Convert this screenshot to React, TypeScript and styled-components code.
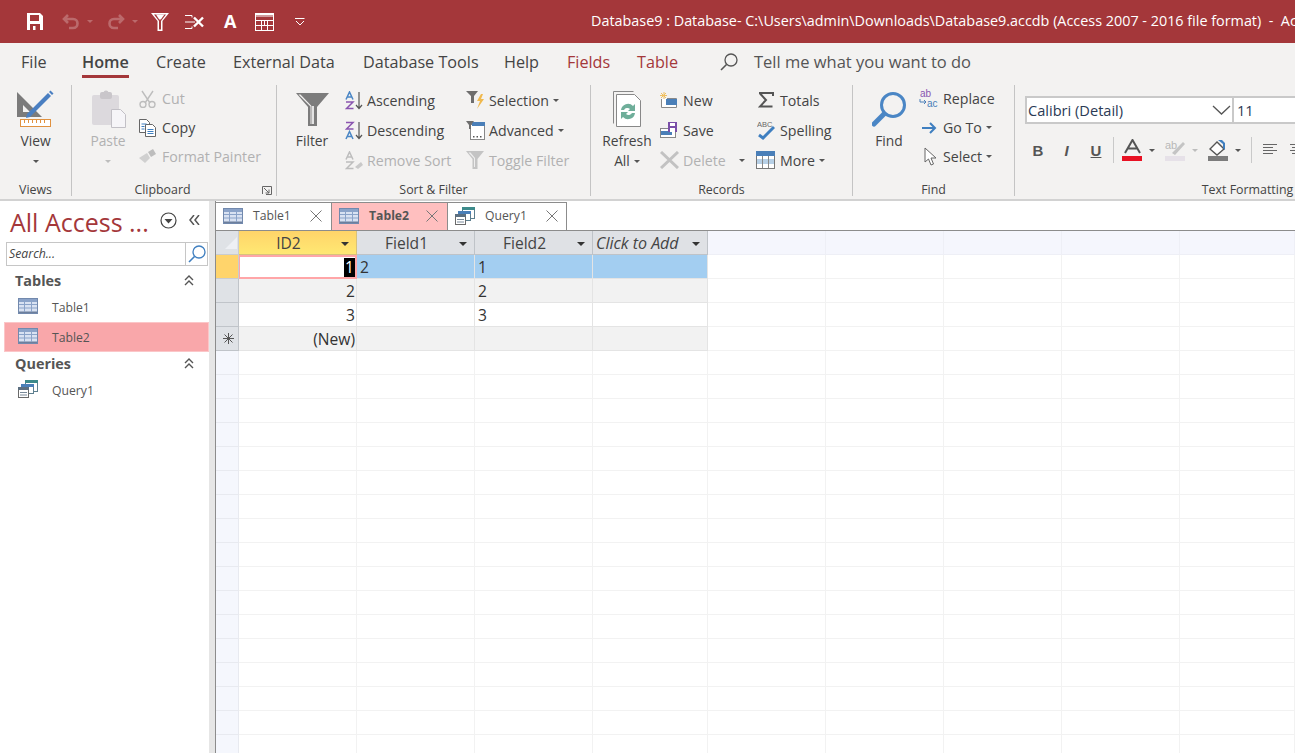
import React from 'react';
import styled, { createGlobalStyle } from 'styled-components';

const Global = createGlobalStyle`
  html, body { margin: 0; padding: 0; background: #fff; overflow: hidden; }
  * { box-sizing: border-box; }
`;
const FONT = `"Open Sans", "Noto Sans", "Liberation Sans", sans-serif`;
const RED = '#a4373a';

const Page = styled.div`
  width: 1295px; height: 753px; overflow: hidden; display: flex; flex-direction: column;
  font-family: ${FONT}; color: #444;
`;
const TitleBar = styled.header`
  height: 43px; background: ${RED}; display: flex; align-items: center; flex-shrink: 0;
`;
const Qat = styled.div`
  width: 591px; flex-shrink: 0; height: 100%; display: flex; align-items: center; padding-left: 27px;
`;
const QatSlot = styled.span<{ $w: number }>`
  width: ${p => p.$w}px; flex-shrink: 0; display: flex; align-items: center; height: 100%;
`;
const QatLetter = styled.span`
  color: #fff; font-size: 18px; font-weight: 700; line-height: 18px; margin-top: -2px;
`;
const Title = styled.div`
  color: #fff; font-size: 14.38px; white-space: pre; margin-top: -3px;
`;
const Tabs = styled.nav`
  height: 37px; background: #f3f2f1; display: flex; padding-left: 21px; flex-shrink: 0;
`;
const Tab = styled.div<{ $w: number }>`
  width: ${p => p.$w}px; flex-shrink: 0;
`;
const TabLabel = styled.span<{ $active?: boolean; $ctx?: boolean }>`
  display: inline-block; padding-top: 8px; height: 35px; line-height: 22px; font-size: 16.2px;
  white-space: nowrap; color: ${p => (p.$ctx ? RED : '#444')};
  font-weight: ${p => (p.$active ? 600 : 400)};
  border-bottom: 3px solid ${p => (p.$active ? RED : 'transparent')};
`;
const TellMe = styled.div`
  display: flex; align-items: center; gap: 16px; height: 37px; font-size: 16.5px; color: #555; white-space: nowrap;
`;
const Ribbon = styled.section`
  height: 121px; background: #f3f2f1; display: flex; padding-top: 5px; flex-shrink: 0;
  border-bottom: 2px solid #d2d2d2; overflow: hidden;
`;
const Group = styled.div<{ $w: number; $last?: boolean }>`
  width: ${p => p.$w}px; flex-shrink: 0; height: 111px; display: flex; flex-direction: column;
  border-right: ${p => (p.$last ? 'none' : '1px solid #c4c4c4')};
`;
const GroupBody = styled.div<{ $pl?: number }>`
  height: 97px; display: flex; padding-left: ${p => p.$pl ?? 0}px; flex-shrink: 0;
`;
const GroupFoot = styled.div`
  height: 14px; display: flex; align-items: flex-start;
`;
const GroupLabel = styled.div`
  flex: 1; text-align: center; font-size: 12.4px; line-height: 16px; margin-top: 0; color: #444; white-space: nowrap;
`;
const Launcher = styled.span`
  width: 10px; height: 9px; margin: 4px 4px 0 9px; display: flex;
`;
const Large = styled.div<{ $w: number; $off?: boolean }>`
  width: ${p => p.$w}px; flex-shrink: 0; padding-top: 4px; display: flex; flex-direction: column; align-items: center;
  font-size: 13.8px; line-height: 20px; color: ${p => (p.$off ? '#b1b1b1' : '#444')};
`;
const LargeIcon = styled.div`
  height: 40px; margin-bottom: 2px; display: flex; align-items: center; justify-content: center;
`;
const LargeLine = styled.div`
  height: 20px; display: flex; align-items: center; gap: 3px; white-space: nowrap;
`;
const Col = styled.div<{ $w: number; $ml?: number; $rh?: number; $mt?: number }>`
  width: ${p => p.$w}px; flex-shrink: 0; margin-left: ${p => p.$ml ?? 0}px; margin-top: ${p => p.$mt ?? 0}px;
  display: grid; grid-auto-rows: ${p => p.$rh ?? 30}px; align-content: start;
`;
const Row = styled.div<{ $off?: boolean }>`
  display: flex; align-items: center; font-size: 14.2px; white-space: nowrap;
  color: ${p => (p.$off ? '#b1b1b1' : '#444')};
`;
const RowIcon = styled.span<{ $w: number; $pl?: number }>`
  width: ${p => p.$w}px; flex-shrink: 0; display: flex; align-items: center; padding-left: ${p => p.$pl ?? 0}px;
`;
const Caret = styled.span<{ $off?: boolean; $ml?: number }>`
  display: inline-block; width: 0; height: 0; margin-left: ${p => p.$ml ?? 4}px;
  border-left: 3px solid transparent; border-right: 3px solid transparent;
  border-top: 3px solid ${p => (p.$off ? '#bdbdbd' : '#555')};
`;
const FormatBody = styled.div`
  padding: 11px 0 0 10px; height: 97px; display: flex; flex-direction: column;
`;
const FontRow = styled.div`
  display: flex; height: 28px;
`;
const FontBox = styled.div`
  width: 208px; height: 28px; background: #fff; border: 2px solid #c9c9c9; border-right-width: 1px;
  display: flex; align-items: center; justify-content: space-between; padding: 0 1px 0 1px;
  font-size: 14.6px; color: #2b3a55;
`;
const SizeBox = styled.div`
  width: 100px; height: 28px; background: #fff; border: 2px solid #c9c9c9; border-left-width: 1px;
  display: flex; align-items: center; padding-left: 3px; font-size: 14.6px; color: #2b3a55;
`;
const FormatTools = styled.div`
  display: flex; align-items: center; margin-top: 12px; height: 28px;
`;
const FormatBtn = styled.span<{ $w: number; $i?: boolean; $u?: boolean }>`
  width: ${p => p.$w}px; flex-shrink: 0; text-align: center; font-size: 15px; font-weight: 700; color: #555;
  font-style: ${p => (p.$i ? 'italic' : 'normal')}; text-decoration: ${p => (p.$u ? 'underline' : 'none')};
  font-family: "Liberation Sans", sans-serif;
`;
const ToolSep = styled.span<{ $ml: number; $mr: number }>`
  width: 1px; height: 26px; background: #c9c9c9; margin: 0 ${p => p.$mr}px 0 ${p => p.$ml}px; flex-shrink: 0;
`;
const Tool = styled.span<{ $w: number }>`
  width: ${p => p.$w}px; flex-shrink: 0; display: flex; align-items: center;
`;

const Workspace = styled.main`
  flex: 1; display: flex; min-height: 0; background: #fff;
`;
const Nav = styled.aside`
  width: 209px; flex-shrink: 0; background: #fff; display: flex; flex-direction: column;
`;
const NavHead = styled.div`
  height: 41px; display: flex; align-items: center; padding-left: 10px; flex-shrink: 0;
`;
const NavTitle = styled.div`
  color: ${RED}; font-size: 25px; width: 150px; white-space: nowrap; margin-top: 1px;
`;
const NavIconBtn = styled.span<{ $w: number }>`
  width: ${p => p.$w}px; flex-shrink: 0; display: flex; align-items: center; margin-top: -3px;
`;
const SearchBox = styled.div`
  margin-left: 6px; width: 202px; height: 24px; border: 1px solid #c6c6c6; display: flex; flex-shrink: 0;
`;
const SearchInput = styled.div`
  flex: 1; font-style: italic; font-size: 12.3px; line-height: 22px; padding-left: 2px; color: #444; border-right: 1px solid #c6c6c6;
`;
const SearchBtn = styled.span`
  width: 21px; display: flex; align-items: center; justify-content: center;
`;
const NavSection = styled.div<{ $h: number; $pt: number }>`
  height: ${p => p.$h}px; padding: ${p => p.$pt}px 15px 0 15px; display: flex; align-items: center; justify-content: space-between;
  font-size: 14.4px; font-weight: 700; color: #555;
`;
const NavItem = styled.div<{ $sel?: boolean }>`
  margin-left: 4px; height: 30px; display: flex; align-items: center; padding-left: ${p => (p.$sel ? 13 : 14)}px; gap: 14px;
  font-size: 12.2px; color: #555; background: ${p => (p.$sel ? '#f9a7aa' : 'transparent')};
  border: ${p => (p.$sel ? '1px solid #fbc6c8' : '0 solid transparent')};
`;
const NavIcon = styled.span`
  width: 20px; display: flex; align-items: center; margin-top: -2px;
`;
const Splitter = styled.div`
  width: 6px; flex-shrink: 0; background: #e6e6e6;
`;
const Main = styled.div`
  flex: 1; min-width: 0; display: flex; flex-direction: column; border-left: 1px solid #8c8c8c; overflow: hidden;
`;
const DocTabs = styled.div`
  height: 30px; display: flex; flex-shrink: 0; padding-top: 1px; border-bottom: 1px solid #8c8c8c; background: #fff;
`;
const DocTab = styled.div<{ $w: number; $on?: boolean }>`
  width: ${p => p.$w}px; flex-shrink: 0; display: flex; align-items: center; padding-left: 7px; padding-bottom: 2px;
  border-top: 1px solid #8c8c8c; border-right: 1px solid #8c8c8c; background: ${p => (p.$on ? '#ffbfbf' : '#fff')};
  font-size: 12.2px; font-weight: ${p => (p.$on ? 700 : 400)}; color: #555;
`;
const DocLabel = styled.span<{ $w: number }>`
  width: ${p => p.$w}px; margin-left: 10px; white-space: nowrap;
`;
const Sheet = styled.div`
  display: grid; grid-template-columns: 23px 118px 118px 118px 115px 118px 118px 118px 118px 115px; grid-auto-rows: 24px;
  font-size: 15.6px;
`;
type CellKind = 'plain' | 'alt' | 'sel' | 'empty' | 'corner' | 'head' | 'active' | 'sideOn' | 'side' | 'sideEmpty' | 'ghost' | 'edit';
const bg: Record<CellKind, string> = {
  plain: '#fff', alt: '#f2f2f2', sel: '#a3cef1', empty: '#fff', corner: '#dfe2e6', head: '#dfe1e5',
  active: 'linear-gradient(#ffd469, #ffe873)', sideOn: '#ffd46b', side: '#dfe2e6', sideEmpty: '#f5f7fd', ghost: '#f5f6fd', edit: '#fff',
};
const line: Record<CellKind, string> = {
  plain: '#e4e4e4', alt: '#e4e4e4', sel: '#e4e4e4', empty: '#f2f2f2', corner: '#c9ccd0', head: '#bfc3c8',
  active: '#d8c27c', sideOn: '#c9ccd0', side: '#c0c4c9', sideEmpty: '#e8eaf0', ghost: '#eeeff6', edit: '#ffa6a8',
};
const Cell = styled.div<{ $k: CellKind; $right?: boolean; $italic?: boolean }>`
  background: ${p => bg[p.$k]};
  border-right: 1px solid ${p => line[p.$k]};
  border-bottom: 1px solid ${p => line[p.$k]};
  ${p => (p.$k === 'edit' ? 'border: 2px solid #ffa6a8; border-left-width: 1px;' : '')}
  display: flex; align-items: center; white-space: nowrap; padding: 0 ${p => (p.$k === 'edit' ? 0 : 1)}px 0 3px;
  justify-content: ${p => (p.$right ? 'flex-end' : 'flex-start')};
  font-style: ${p => (p.$italic ? 'italic' : 'normal')};
  color: #333;
`;
const HeadCell = styled(Cell)`
  padding: 0 7px 0 0; color: #444; justify-content: center;
`;
const HeadText = styled.span<{ $left?: boolean }>`
  flex: 1; text-align: ${p => (p.$left ? 'left' : 'center')}; margin-left: ${p => (p.$left ? 3 : -3)}px;
  font-size: ${p => (p.$left ? 16 : 15.6)}px;
`;
const DropArrow = styled.span`
  width: 0; height: 0; border-left: 4px solid transparent; border-right: 4px solid transparent; border-top: 4px solid #333; margin-top: 2px; flex-shrink: 0;
`;
const SelText = styled.span`
  background: #000; color: #fff; padding: 0 1px; line-height: 19px;
`;
const SideStar = styled.span`
  width: 100%; display: flex; justify-content: center;
`;

/* ---------- drawings ---------- */
const SaveIcon = () => (
  <svg width="16" height="17" viewBox="0 0 16 17"><path fill="#fff" d="M0 0h13l3 3v14H0z" /><rect x="3" y="2" width="9" height="6" fill={RED} /><rect x="3" y="11" width="10" height="6" fill={RED} /><rect x="6" y="13" width="2.5" height="4" fill="#fff" /></svg>
);
const Undo = ({ flip }: { flip?: boolean }) => (
  <svg width="18" height="16" viewBox="0 0 18 16" style={flip ? { transform: 'scaleX(-1)' } : undefined}><path d="M6 1 2 5l4 4M2 5h9c6 0 6 9 0 9H7" fill="none" stroke="#bb6a6c" strokeWidth="2.6" /></svg>
);
const MiniCaret = () => <svg width="6" height="3" viewBox="0 0 6 3"><path d="M0 0h6L3 3z" fill="#bb6a6c" /></svg>;
const QatFilter = () => (
  <svg width="18" height="18" viewBox="0 0 18 18"><path d="M0 0h18l-6.500 8v10h-5V8z" fill="#fff" /><path d="M3 1.500h12L10 8v8.500H8V8z" fill={RED} /><path d="M5 1.500h8.500L9.800 6.500H8.200z" fill="#fff" /></svg>
);
const QatField = () => (
  <svg width="20" height="16" viewBox="0 0 20 16" fill="none" stroke="#fff"><path d="M0 1.500h7v2M0 8h10M0 14.500h7v-2" /><path d="M9 3.500l9 9M18 3.500l-9 9" strokeWidth="2.400" /></svg>
);
const QatTable = () => (
  <svg width="19" height="18" viewBox="0 0 19 18" fill="none" stroke="#fff"><rect x=".5" y=".5" width="18" height="17" /><path d="M.5 1.500h18M.5 3h18" /><path d="M.5 7.500h18M.5 12.500h18M6.500 7.500v10M12.500 7.500v10M9.500 7.500v5" /></svg>
);
const QatDrop = () => (
  <svg width="10" height="8" viewBox="0 0 10 8" fill="none" stroke="#fff"><path d="M0 .5h9.500M1 3l4 4 4-4" /></svg>
);
const ViewIcon = () => (
  <svg width="37" height="38" viewBox="0 0 37 38"><path d="M0 2 25 27H0z" fill="#7b7b7b" /><path d="M6 15l7 7H6z" fill="#f3f2f1" /><path d="M10 24 31 3l3 3-21 21-4 1z" fill="#4a7fc1" /><path d="M32 2l1.500-1.500 3 3L35 5z" fill="#4a7fc1" /><rect x="3.500" y="29.500" width="30" height="7" fill="#fff" stroke="#e0913f" /><path d="M7.500 30v3M11.500 30v3M15.500 30v3M19.500 30v3M23.500 30v3M27.500 30v3" stroke="#e0913f" /></svg>
);
const PasteIcon = () => (
  <svg width="35" height="38" viewBox="0 0 35 38"><rect x="1" y="5" width="27" height="30" rx="2" fill="#dcd9dd" /><rect x="9" y="2" width="12" height="7" rx="2" fill="#c9c6ca" /><circle cx="15" cy="3" r="2.500" fill="#c9c6ca" /><path d="M20.500 19.500h9l5 5v13h-14z" fill="#f6f5f8" stroke="#c2c0c6" /></svg>
);
const CutIcon = () => (
  <svg width="17" height="18" viewBox="0 0 17 18" fill="none" stroke="#bdbdbd" strokeWidth="1.400"><path d="M3 1l8 12M14 1 6 13" /><circle cx="4" cy="14.500" r="3" /><circle cx="13" cy="14.500" r="3" /></svg>
);
const CopyIcon = () => (
  <svg width="17" height="18" viewBox="0 0 17 18" fill="#fff"><path d="M.5.500h7l3 3v10H.5z" stroke="#666" /><path d="M6.500 5.500h7l3 3v9h-10z" stroke="#666" /><path d="M2.500 5h5M2.500 7.500h3M2.500 10h3M8.500 10.500h6M8.500 12.500h6M8.500 14.500h6" stroke="#3f7fc0" /></svg>
);
const PainterIcon = () => (
  <svg width="18" height="15" viewBox="0 0 18 15"><path d="M0 9l8-5 3 5-5 5z" fill="#d0d0d0" /><path d="M9 3l5-3 3 5-5 3z" fill="#bdbdbd" /></svg>
);
const FilterBig = () => (
  <svg width="33" height="33" viewBox="0 0 33 33"><path d="M0 0h33L21 14v19h-9V14z" fill="#7c7c7c" /><path d="M2.500 1.500h2L15.500 13v18h-1V13.500z" fill="#f3f2f1" /><rect x="16" y="13" width="2" height="18" fill="#e3e3e3" /></svg>
);
const SortIcon = ({ kind }: { kind: 'a' | 'd' | 'r' }) => {
  const first = kind === 'd' ? '#8a55b0' : kind === 'r' ? '#bdbdbd' : '#4a86c5';
  const second = kind === 'd' ? '#4a86c5' : kind === 'r' ? '#bdbdbd' : '#8a55b0';
  const d1 = kind === 'd' ? 'M1 1.500h7L1.500 8h7' : 'M1 8.500 4.500 1 8 8.500M2 6h5';
  const d2 = kind === 'd' ? 'M1 18 4.500 10.500 8 18M2 15.500h5' : 'M1 11h7L1.500 17.500h7';
  return (
    <svg width="18" height="19" viewBox="0 0 18 19" fill="none">
      <path d={d1} stroke={first} strokeWidth="1.500" />
      <path d={d2} stroke={second} strokeWidth="1.500" />
      {kind === 'r'
        ? <path d="M10 16l6-5 2 3-5 4z" fill="#c9c9c9" />
        : <path d="M14 1v16M11 14l3 3.500 3-3.500" stroke="#555" strokeWidth="1.200" />}
    </svg>
  );
};
const SelectionIcon = () => (
  <svg width="19" height="19" viewBox="0 0 19 19"><path d="M0 0h12L8 5v7H5V5z" fill="#6e6e6e" /><path d="M15 3l-4 7h3l-3 8 7-10h-3l2-5z" fill="#f0b94e" /></svg>
);
const AdvancedIcon = () => (
  <svg width="19" height="19" viewBox="0 0 19 19"><rect x="4.500" y="3.500" width="14" height="15" fill="#fff" stroke="#888" /><rect x="6" y="1" width="13" height="4" fill="#4a7fb8" /><path d="M0 0h8L5 4v4H3V4z" fill="#6e6e6e" /><path d="M7 15h1.500v1.500H7zM10.500 15H12v1.500h-1.500zM14 15h1.500v1.500H14z" fill="#555" /></svg>
);
const ToggleIcon = () => (
  <svg width="18" height="18" viewBox="0 0 18 18"><path d="M0 0h18l-6.500 8v10h-5V8z" fill="#c4c4c4" /><path d="M2.500 1.500h2l4.500 5.500v9H8V7.500z" fill="#eee" /></svg>
);
const RefreshIcon = () => (
  <svg width="29" height="37" viewBox="0 0 29 37" fill="none"><path d="M.5 32.500V.5h20" stroke="#888" /><path d="M3.500 35.500v-32h18l6 6v26z" fill="#fff" stroke="#888" /><path d="M8 19a7 7 0 0 1 12-4l2-2v7h-7l2-2a4 4 0 0 0-6 1z" fill="#6fae9a" /><path d="M22 22a7 7 0 0 1-12 4l-2 2v-7h7l-2 2a4 4 0 0 0 6-1z" fill="#6fae9a" /></svg>
);
const NewIcon = () => (
  <svg width="18" height="16" viewBox="0 0 18 16"><path d="M1.500 7v8.500h15V6.500H7" fill="#fff" stroke="#888" /><rect x="6" y="7" width="11" height="6" fill="#4a7fb8" /><path d="M4 0v7M0 3.500h7M1 1l5 5M6 1 1 6" stroke="#f0c060" /></svg>
);
const SaveSmall = () => (
  <svg width="17" height="16" viewBox="0 0 17 16"><rect x=".5" y="6.500" width="15" height="9" fill="#fff" stroke="#888" /><rect x="1" y="9" width="11" height="4" fill="#4a7fb8" /><rect x="8" y="0" width="9" height="10" fill="#7a4fa8" /><rect x="10" y="1" width="5" height="3" fill="#fff" /><rect x="10" y="6" width="5" height="4" fill="#fff" /></svg>
);
const DeleteIcon = () => (
  <svg width="19" height="18" viewBox="0 0 19 18"><path d="M1 1l17 16M18 1 1 17" stroke="#c2c2c2" strokeWidth="3" /></svg>
);
const SigmaIcon = () => (
  <svg width="16" height="16" viewBox="0 0 16 16"><path d="M1 1h14v3M14.500 14.500H2L8 8 2 1.500" fill="none" stroke="#555" strokeWidth="2" /></svg>
);
const SpellIcon = () => (
  <svg width="18" height="20" viewBox="0 0 18 20"><path d="M2 17l4 3L17 9" fill="none" stroke="#3f7fc0" strokeWidth="3" transform="translate(0 -2)" /><text x="0" y="7" fontSize="7.500" fontFamily="Liberation Sans" fill="#666">ABC</text></svg>
);
const MoreIcon = () => (
  <svg width="19" height="18" viewBox="0 0 19 18"><rect x=".5" y=".5" width="18" height="17" fill="#fff" stroke="#777" /><rect x="1" y="8" width="17" height="5" fill="#b7d0e6" /><rect x="0" y="0" width="19" height="5" fill="#4a7fb8" /><path d="M6.500 5v12M12.500 5v12" stroke="#888" /></svg>
);
const FindIcon = () => (
  <svg width="35" height="36" viewBox="0 0 35 36" fill="none"><circle cx="21" cy="14" r="11.500" stroke="#4a86c5" strokeWidth="3" /><path d="M12 23 2 33" stroke="#4a86c5" strokeWidth="5" strokeLinecap="round" /></svg>
);
const ReplaceIcon = () => (
  <svg width="20" height="19" viewBox="0 0 20 19"><text x="1" y="8" fontSize="10" fontFamily="Liberation Sans" fill="#8a55b0">ab</text><text x="8" y="18" fontSize="10" fontFamily="Liberation Sans" fill="#4a7fb8">ac</text><path d="M1 10v3h6M5 11l2 2-2 2" fill="none" stroke="#4a7fb8" /></svg>
);
const ArrowIcon = () => (
  <svg width="15" height="12" viewBox="0 0 15 12" fill="none" stroke="#3f7fc0" strokeWidth="2"><path d="M0 6h13M8 1l5 5-5 5" /></svg>
);
const CursorIcon = () => (
  <svg width="13" height="19" viewBox="0 0 13 19"><path d="M1 1v14l3.500-3 2.500 6 2.500-1-2.500-6h5z" fill="#fff" stroke="#666" /></svg>
);
const Launch = () => (
  <svg width="10" height="9" viewBox="0 0 10 9" fill="none" stroke="#666"><path d="M.5 8V.5H9.500V8.500H4" /><path d="M2 2l5 5M7 3.500V7H3.500" /></svg>
);
const SearchGlass = ({ size = 18, color = '#555' }: { size?: number; color?: string }) => (
  <svg width={size} height={size} viewBox="0 0 18 18" fill="none" stroke={color}><circle cx="11" cy="7" r="6" strokeWidth="1.300" /><path d="M6.500 11.500 1 17" strokeWidth="1.600" /></svg>
);
const Chevron = () => (
  <svg width="19" height="10" viewBox="0 0 19 10" fill="none" stroke="#555" strokeWidth="1.300"><path d="M1 1l8.500 8L18 1" /></svg>
);
const FontColor = () => (
  <svg width="21" height="23" viewBox="0 0 21 23"><path d="M3 14 10.500 1 18 14M6 9.500h9" fill="none" stroke="#555" strokeWidth="2" /><rect x="0" y="17" width="20" height="5" fill="#e81123" /></svg>
);
const Highlight = () => (
  <svg width="21" height="22" viewBox="0 0 21 22"><text x="0" y="10" fontSize="11" fontFamily="Liberation Sans" fill="#b8b8b8">ab</text><path d="M7 14 18 3l2 2L10 16z" fill="#c4c4c4" /><rect x="0" y="17" width="20" height="5" fill="#e6e1e8" /></svg>
);
const Bucket = () => (
  <svg width="21" height="23" viewBox="0 0 21 23"><path d="M2 10l7-7 7 7-7 6z" fill="#fff" stroke="#555" strokeWidth="1.400" /><path d="M10 1h4l3 3v7l-2-2V5z" fill="#3f7fc0" /><rect x="0" y="17" width="20" height="5" fill="#7c7c7c" /></svg>
);
const AlignLeft = () => (
  <svg width="15" height="12" viewBox="0 0 15 12" stroke="#666"><path d="M0 .5h14M0 3.500h10M0 6.500h14M0 9.500h10" /></svg>
);
const AlignCenter = () => (
  <svg width="15" height="12" viewBox="0 0 15 12" stroke="#666"><path d="M0 .5h14M2 3.500h10M0 6.500h14M2 9.500h10" /></svg>
);
const CircleDown = () => (
  <svg width="17" height="17" viewBox="0 0 17 17" fill="none"><circle cx="8.500" cy="8.500" r="7.500" stroke="#444" strokeWidth="1.200" /><path d="M4.500 7h8l-4 4.500z" fill="#444" /></svg>
);
const DoubleLeft = () => (
  <svg width="11" height="10" viewBox="0 0 11 10" fill="none" stroke="#555" strokeWidth="1.500"><path d="M5 0 1 5l4 5M10 0 6 5l4 5" /></svg>
);
const DoubleUp = () => (
  <svg width="10" height="11" viewBox="0 0 10 11" fill="none" stroke="#555" strokeWidth="1.400"><path d="M1 5l4-4 4 4M1 10l4-4 4 4" /></svg>
);
const TableIcon = () => (
  <svg width="20" height="16" viewBox="0 0 20 16">
    <rect width="20" height="16" fill="#d9e2f2" />
    <rect width="20" height="4" fill="#8ba3c9" />
    <rect y="13.500" width="20" height="2.500" fill="#6d7f9c" />
    <path d="M6.500 0v14M13.500 0v14M0 6.500h20M0 10h20" stroke="#8ba3c9" />
    <rect x=".5" y=".5" width="19" height="15" fill="none" stroke="#7289ad" />
  </svg>
);
const QueryIcon = () => (
  <svg width="20" height="18" viewBox="0 0 20 18">
    <rect x="7.500" y=".5" width="12" height="11" fill="#fff" stroke="#5d7f8f" /><rect x="7" width="13" height="3" fill="#3d8a8a" />
    <rect x="3.500" y="4.500" width="12" height="9" fill="#fff" stroke="#5d7f8f" /><rect x="3" y="4" width="13" height="3" fill="#4a7fb8" />
    <rect x=".5" y="7.500" width="10" height="10" fill="#fff" stroke="#6a6a6a" /><rect y="7" width="11" height="3" fill="#5c6f80" />
    <path d="M2 12.500h7M2 15h7" stroke="#7a8a9a" />
  </svg>
);
const CloseX = () => (
  <svg width="12" height="12" viewBox="0 0 12 12" stroke="#777"><path d="M.5.5l11 11M11.500.5l-11 11" /></svg>
);
const Corner = () => (
  <svg width="12" height="12" viewBox="0 0 12 12"><path d="M12 0v12H0z" fill="#eef0f4" /></svg>
);
const Asterisk = () => (
  <svg width="11" height="11" viewBox="0 0 11 11" stroke="#555"><path d="M5.500 0v11M0 5.500h11M1.500 1.500l8 8M9.500 1.500l-8 8" /></svg>
);

/* ---------- data ---------- */
const tabs: [string, number, boolean?, boolean?][] = [
  ['File', 61], ['Home', 74, true], ['Create', 77], ['External Data', 130], ['Database Tools', 141], ['Help', 63],
  ['Fields', 70, false, true], ['Table', 83, false, true],
];
const ghosts = Array.from({ length: 5 });
const blankRows = Array.from({ length: 18 });
const dataRows: { id: string; f1: string; f2: string }[] = [
  { id: '2', f1: '', f2: '2' },
  { id: '3', f1: '', f2: '3' },
  { id: '(New)', f1: '', f2: '' },
];
const Fill = ({ k, n }: { k: CellKind; n: number }) => (
  <>{Array.from({ length: n }).map((_, i) => <Cell key={i} $k={k} />)}</>
);

export default function App() {
  return (
    <Page>
      <Global />
      <TitleBar>
        <Qat>
          <QatSlot $w={35}><SaveIcon /></QatSlot>
          <QatSlot $w={25}><Undo /></QatSlot>
          <QatSlot $w={20}><MiniCaret /></QatSlot>
          <QatSlot $w={25}><Undo flip /></QatSlot>
          <QatSlot $w={19}><MiniCaret /></QatSlot>
          <QatSlot $w={34}><QatFilter /></QatSlot>
          <QatSlot $w={39}><QatField /></QatSlot>
          <QatSlot $w={31}><QatLetter>A</QatLetter></QatSlot>
          <QatSlot $w={40}><QatTable /></QatSlot>
          <QatSlot $w={12}><QatDrop /></QatSlot>
        </Qat>
        <Title>{'Database9 : Database- C:\\Users\\admin\\Downloads\\Database9.accdb (Access 2007 - 2016 file format)  -  Access'}</Title>
      </TitleBar>
      <Tabs>
        {tabs.map(([t, w, a, c]) => (
          <Tab key={t} $w={w}><TabLabel $active={a} $ctx={c}>{t}</TabLabel></Tab>
        ))}
        <TellMe><SearchGlass /><span>Tell me what you want to do</span></TellMe>
      </Tabs>
      <Ribbon>
        <Group $w={72}>
          <GroupBody>
            <Large $w={71}>
              <LargeIcon><ViewIcon /></LargeIcon>
              <LargeLine>View</LargeLine>
              <LargeLine><Caret $ml={0} /></LargeLine>
            </Large>
          </GroupBody>
          <GroupFoot><GroupLabel>Views</GroupLabel></GroupFoot>
        </Group>
        <Group $w={205}>
          <GroupBody $pl={6}>
            <Large $w={60} $off>
              <LargeIcon><PasteIcon /></LargeIcon>
              <LargeLine>Paste</LargeLine>
              <LargeLine><Caret $ml={0} $off /></LargeLine>
            </Large>
            <Col $w={130} $ml={1} $rh={29} $mt={-1}>
              <Row $off><RowIcon $w={23}><CutIcon /></RowIcon>Cut</Row>
              <Row><RowIcon $w={23}><CopyIcon /></RowIcon>Copy</Row>
              <Row $off><RowIcon $w={23}><PainterIcon /></RowIcon>Format Painter</Row>
            </Col>
          </GroupBody>
          <GroupFoot><GroupLabel>Clipboard</GroupLabel><Launcher><Launch /></Launcher></GroupFoot>
        </Group>
        <Group $w={314}>
          <GroupBody $pl={5}>
            <Large $w={60}>
              <LargeIcon><FilterBig /></LargeIcon>
              <LargeLine>Filter</LargeLine>
            </Large>
            <Col $w={121} $ml={3}>
              <Row><RowIcon $w={22}><SortIcon kind="a" /></RowIcon>Ascending</Row>
              <Row><RowIcon $w={22}><SortIcon kind="d" /></RowIcon>Descending</Row>
              <Row $off><RowIcon $w={22}><SortIcon kind="r" /></RowIcon>Remove Sort</Row>
            </Col>
            <Col $w={120}>
              <Row><RowIcon $w={23}><SelectionIcon /></RowIcon>Selection<Caret /></Row>
              <Row><RowIcon $w={23}><AdvancedIcon /></RowIcon>Advanced<Caret /></Row>
              <Row $off><RowIcon $w={23}><ToggleIcon /></RowIcon>Toggle Filter</Row>
            </Col>
          </GroupBody>
          <GroupFoot><GroupLabel>Sort &amp; Filter</GroupLabel></GroupFoot>
        </Group>
        <Group $w={262}>
          <GroupBody $pl={5}>
            <Large $w={62}>
              <LargeIcon><RefreshIcon /></LargeIcon>
              <LargeLine>Refresh</LargeLine>
              <LargeLine>All<Caret $ml={1} /></LargeLine>
            </Large>
            <Col $w={96} $ml={2}>
              <Row><RowIcon $w={23}><NewIcon /></RowIcon>New</Row>
              <Row><RowIcon $w={23}><SaveSmall /></RowIcon>Save</Row>
              <Row $off><RowIcon $w={23}><DeleteIcon /></RowIcon>Delete<Caret $ml={13} /></Row>
            </Col>
            <Col $w={90}>
              <Row><RowIcon $w={24} $pl={2}><SigmaIcon /></RowIcon>Totals</Row>
              <Row><RowIcon $w={24} $pl={1}><SpellIcon /></RowIcon>Spelling</Row>
              <Row><RowIcon $w={24}><MoreIcon /></RowIcon>More<Caret /></Row>
            </Col>
          </GroupBody>
          <GroupFoot><GroupLabel>Records</GroupLabel></GroupFoot>
        </Group>
        <Group $w={162}>
          <GroupBody $pl={6}>
            <Large $w={60}>
              <LargeIcon><FindIcon /></LargeIcon>
              <LargeLine>Find</LargeLine>
            </Large>
            <Col $w={90} $rh={29} $mt={-1}>
              <Row><RowIcon $w={24}><ReplaceIcon /></RowIcon>Replace</Row>
              <Row><RowIcon $w={24} $pl={3}><ArrowIcon /></RowIcon>Go To<Caret /></Row>
              <Row><RowIcon $w={24} $pl={5}><CursorIcon /></RowIcon>Select<Caret /></Row>
            </Col>
          </GroupBody>
          <GroupFoot><GroupLabel>Find</GroupLabel></GroupFoot>
        </Group>
        <Group $w={465} $last>
          <FormatBody>
            <FontRow>
              <FontBox>Calibri (Detail)<Chevron /></FontBox>
              <SizeBox>11</SizeBox>
            </FontRow>
            <FormatTools>
              <FormatBtn $w={26}>B</FormatBtn>
              <FormatBtn $w={31} $i>I</FormatBtn>
              <FormatBtn $w={28} $u>U</FormatBtn>
              <ToolSep $ml={3} $mr={8} />
              <Tool $w={27}><FontColor /></Tool>
              <Tool $w={16}><Caret $ml={0} /></Tool>
              <Tool $w={27}><Highlight /></Tool>
              <Tool $w={16}><Caret $ml={0} $off /></Tool>
              <Tool $w={27}><Bucket /></Tool>
              <Tool $w={16}><Caret $ml={0} /></Tool>
              <ToolSep $ml={0} $mr={11} />
              <Tool $w={27}><AlignLeft /></Tool>
              <Tool $w={20}><AlignCenter /></Tool>
            </FormatTools>
          </FormatBody>
          <GroupFoot><GroupLabel>Text Formatting</GroupLabel></GroupFoot>
        </Group>
      </Ribbon>
      <Workspace>
        <Nav>
          <NavHead>
            <NavTitle>All Access ...</NavTitle>
            <NavIconBtn $w={29}><CircleDown /></NavIconBtn>
            <NavIconBtn $w={11}><DoubleLeft /></NavIconBtn>
          </NavHead>
          <SearchBox>
            <SearchInput>Search...</SearchInput>
            <SearchBtn><SearchGlass color="#3f7fc0" /></SearchBtn>
          </SearchBox>
          <NavSection $h={26} $pt={3}>Tables<DoubleUp /></NavSection>
          <NavItem><NavIcon><TableIcon /></NavIcon>Table1</NavItem>
          <NavItem $sel><NavIcon><TableIcon /></NavIcon>Table2</NavItem>
          <NavSection $h={23} $pt={0}>Queries<DoubleUp /></NavSection>
          <NavItem><NavIcon><QueryIcon /></NavIcon>Query1</NavItem>
        </Nav>
        <Splitter />
        <Main>
          <DocTabs>
            <DocTab $w={116}><TableIcon /><DocLabel $w={57}>Table1</DocLabel><CloseX /></DocTab>
            <DocTab $w={116} $on><TableIcon /><DocLabel $w={57}>Table2</DocLabel><CloseX /></DocTab>
            <DocTab $w={119}><QueryIcon /><DocLabel $w={61}>Query1</DocLabel><CloseX /></DocTab>
          </DocTabs>
          <Sheet>
            <Cell $k="corner" $right><Corner /></Cell>
            <HeadCell $k="active"><HeadText>ID2</HeadText><DropArrow /></HeadCell>
            <HeadCell $k="head"><HeadText>Field1</HeadText><DropArrow /></HeadCell>
            <HeadCell $k="head"><HeadText>Field2</HeadText><DropArrow /></HeadCell>
            <HeadCell $k="head" $italic><HeadText $left>Click to Add</HeadText><DropArrow /></HeadCell>
            <Fill k="ghost" n={5} />

            <Cell $k="sideOn" />
            <Cell $k="edit" $right><SelText>1</SelText></Cell>
            <Cell $k="sel">2</Cell>
            <Cell $k="sel">1</Cell>
            <Cell $k="sel" />
            <Fill k="empty" n={5} />

            {dataRows.map((r, i) => (
              <React.Fragment key={r.id}>
                <Cell $k="side">{r.id === '(New)' && <SideStar><Asterisk /></SideStar>}</Cell>
                <Cell $k={i % 2 ? 'plain' : 'alt'} $right>{r.id}</Cell>
                <Cell $k={i % 2 ? 'plain' : 'alt'}>{r.f1}</Cell>
                <Cell $k={i % 2 ? 'plain' : 'alt'}>{r.f2}</Cell>
                <Cell $k={i % 2 ? 'plain' : 'alt'} />
                {ghosts.map((_, j) => <Cell key={j} $k="empty" />)}
              </React.Fragment>
            ))}

            {blankRows.map((_, i) => (
              <React.Fragment key={i}>
                <Cell $k="sideEmpty" />
                <Fill k="empty" n={9} />
              </React.Fragment>
            ))}
          </Sheet>
        </Main>
      </Workspace>
    </Page>
  );
}
